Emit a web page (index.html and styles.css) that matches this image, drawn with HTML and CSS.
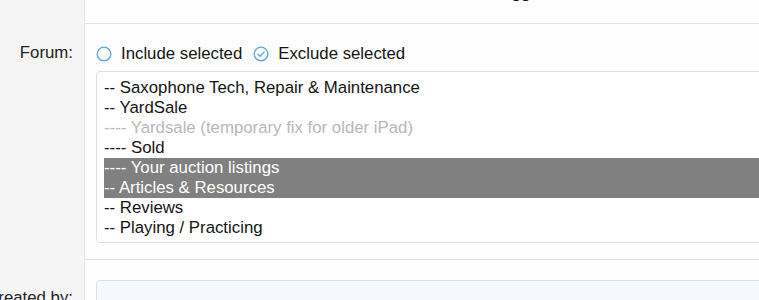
FILE: index.html
```html
<!DOCTYPE html>
<html lang="en">
<head>
    <meta charset="UTF-8">
    <meta name="viewport" content="width=device-width, initial-scale=1.0">
    <title>Search threads</title>
    <link rel="stylesheet" href="styles.css">
</head>
<body>
    <div class="form">
        <div class="form-row">
            <div class="row-label"></div>
            <div class="row-input first">
                <div class="hint">Match threads from the listed members who were all tagged</div>
            </div>
        </div>

        <div class="form-row">
            <div class="row-label"><span>Forum:</span></div>
            <div class="row-input">
                <ul class="choices">
                    <li class="choice">
                        <svg class="choice-icon" viewBox="0 0 16 16" width="16" height="16">
                            <circle cx="8" cy="8" r="6.8" fill="none" stroke="#5aa6de" stroke-width="1.3"/>
                        </svg>
                        Include selected
                    </li>
                    <li class="choice">
                        <svg class="choice-icon" viewBox="0 0 16 16" width="16" height="16">
                            <circle cx="8" cy="8" r="6.8" fill="none" stroke="#5aa6de" stroke-width="1.3"/>
                            <path d="M4.9 8.3 L7.1 10.4 L11.2 6" fill="none" stroke="#5aa6de" stroke-width="1.3" stroke-linecap="round" stroke-linejoin="round"/>
                        </svg>
                        Exclude selected
                    </li>
                </ul>
                <div class="listbox" role="listbox" aria-multiselectable="true">
                    <div class="option">-- Saxophone Tech, Repair &amp; Maintenance</div>
                    <div class="option">-- YardSale</div>
                    <div class="option disabled">---- Yardsale (temporary fix for older iPad)</div>
                    <div class="option">---- Sold</div>
                    <div class="option selected">---- Your auction listings</div>
                    <div class="option selected">-- Articles &amp; Resources</div>
                    <div class="option">-- Reviews</div>
                    <div class="option">-- Playing / Practicing</div>
                </div>
            </div>
        </div>

        <div class="form-row">
            <div class="row-label input-label"><span>Created by:</span></div>
            <div class="row-input">
                <div class="text-box"></div>
            </div>
        </div>
    </div>
</body>
</html>
```

FILE: styles.css
```css
html, body {
    margin: 0;
    padding: 0;
    overflow: hidden;
    background-color: #fefefe;
}
body {
    font-family: "Liberation Sans", Arial, sans-serif;
    font-size: 16.8px;
    line-height: 20px;
    color: #141414;
}
.form {
    width: 900px;
    margin-top: -35px;
}
.form-row {
    display: grid;
    grid-template-columns: 85px 1fr;
}
.row-label {
    box-sizing: border-box;
    display: flex;
    justify-content: flex-end;
    align-items: flex-start;
    background-color: #f5f5f5;
    border-right: 1px solid #e6e6e6;
    padding: 20px 11px 0 0;
    color: #222;
    white-space: nowrap;
}
.row-label span {
    flex-shrink: 0;
}
.input-label {
    padding-top: 29px;
}
.row-input {
    border-top: 1px solid #e4e4e4;
    padding: 20px 0 16px 11px;
}
.row-input.first {
    border-top: none;
    padding: 18px 0 20px 11px;
}
.hint {
    padding-left: 8px;
}
.choices {
    list-style: none;
    margin: 0 0 7px 0;
    padding: 0;
    display: flex;
    gap: 11px;
}
.choice {
    display: flex;
    align-items: center;
    gap: 9px;
}
.choice-icon {
    display: block;
}
.listbox {
    border: 1px solid #d6e2ec;
    border-radius: 4px;
    padding: 6px 0 4px 7px;
    background-color: #fff;
}
.option {
    height: 20px;
    white-space: nowrap;
}
.option.disabled {
    color: #b8b8b8;
}
.option.selected {
    background-color: #808080;
    color: #fff;
}
.text-box {
    height: 36px;
    border: 1px solid #d6dfe8;
    border-radius: 4px;
    background-color: #f5f9fd;
}
```
